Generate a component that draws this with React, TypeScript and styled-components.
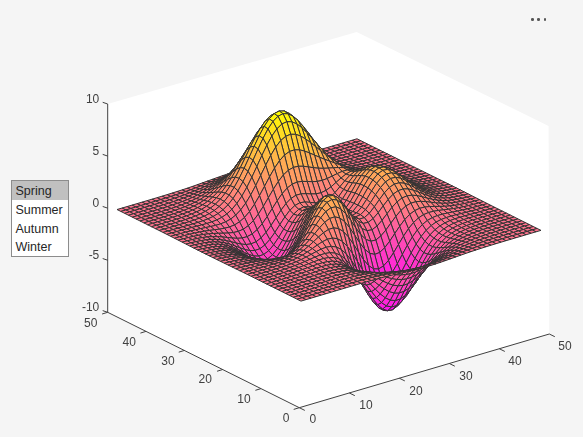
import React from "react";
import styled, { createGlobalStyle } from "styled-components";

const GlobalStyle = createGlobalStyle`
  html, body {
    margin: 0;
    padding: 0;
    background: #f5f5f5;
    font-family: "Liberation Sans", Arial, sans-serif;
  }
`;

const Page = styled.div`
  position: relative;
  width: 583px;
  height: 437px;
  overflow: hidden;
  display: flex;
  align-items: flex-start;
  padding-left: 11px;
  box-sizing: border-box;
  background: #f5f5f5;
`;

const ListBox = styled.ul`
  flex: none;
  width: 58px;
  margin: 180px 0 0;
  padding: 0;
  list-style: none;
  box-sizing: border-box;
  border: 1px solid #8c8c8c;
  background: #fff;
`;

const ListRow = styled.li<{ $selected?: boolean }>`
  height: 18.75px;
  line-height: 20.5px;
  padding-left: 3.5px;
  font-size: 12.5px;
  color: #262626;
  white-space: nowrap;
  background: ${(p) => (p.$selected ? "#c0c0c0" : "#fff")};
`;

const Plot = styled.svg`
  flex: none;
  display: block;
  width: 514px;
  height: 437px;
  filter: blur(0.3px);
`;

const AxesBox = styled.polygon`
  fill: #fff;
`;

const Mesh = styled.g`
  stroke: #333;
  stroke-width: 1;
  stroke-linejoin: round;
`;

const AxisRule = styled.g`
  stroke: #404040;
  stroke-width: 1;
  fill: none;
`;

const TickLabel = styled.text`
  font-family: "Liberation Sans", Arial, sans-serif;
  font-size: 12px;
  fill: #404040;
  dominant-baseline: central;
`;

const AxesToolbar = styled.div`
  position: absolute;
  left: 531px;
  top: 18px;
  display: flex;
  gap: 3.7px;
`;

const ToolbarDot = styled.span`
  width: 2.6px;
  height: 2.6px;
  border-radius: 50%;
  background: #555;
`;

const N = 49;
const OX = 299.8;
const OY = 408.7;
const XV = [250 / 50, -73.7 / 50];
const YV = [-191.6 / 50, -95.4 / 50];
const ZS = 10.42;

const project = (u: number, v: number, z: number): [number, number] => [
  OX + u * XV[0] + v * YV[0],
  OY + u * XV[1] + v * YV[1] - (z + 10) * ZS,
];

const peaks = (x: number, y: number) =>
  3 * (1 - x) ** 2 * Math.exp(-(x ** 2) - (y + 1) ** 2) -
  10 * (x / 5 - x ** 3 - y ** 5) * Math.exp(-(x ** 2) - y ** 2) -
  (1 / 3) * Math.exp(-((x + 1) ** 2) - y ** 2);

const buildFaces = () => {
  const toWorld = (i: number) => -3 + (6 * (i - 1)) / (N - 1);
  const z: number[][] = [];
  let min = Infinity;
  let max = -Infinity;
  for (let i = 1; i <= N; i++) {
    z[i] = [];
    for (let j = 1; j <= N; j++) {
      const v = peaks(toWorld(i), toWorld(j));
      z[i][j] = v;
      min = Math.min(min, v);
      max = Math.max(max, v);
    }
  }
  const faces: { d: string; fill: string }[] = [];
  for (let i = N - 1; i >= 1; i--) {
    for (let j = N - 1; j >= 1; j--) {
      const pts = [
        project(i, j, z[i][j]),
        project(i + 1, j, z[i + 1][j]),
        project(i + 1, j + 1, z[i + 1][j + 1]),
        project(i, j + 1, z[i][j + 1]),
      ];
      const t = (z[i][j] - min) / (max - min);
      faces.push({
        d: "M" + pts.map((p) => `${p[0].toFixed(2)} ${p[1].toFixed(2)}`).join("L") + "Z",
        fill: `rgb(255,${Math.round(t * 255)},${Math.round((1 - t) * 255)})`,
      });
    }
  }
  return faces;
};

const faces = buildFaces();

const seasons = ["Spring", "Summer", "Autumn", "Winter"];

type Label = { text: string; x: number; y: number; anchor?: "end" | "middle" };

const labels: Label[] = [
  { text: "10", x: 99.3, y: 98.5, anchor: "end" },
  { text: "5", x: 99.3, y: 150.5, anchor: "end" },
  { text: "0", x: 99.3, y: 202.5, anchor: "end" },
  { text: "-5", x: 99.3, y: 255, anchor: "end" },
  { text: "-10", x: 99.3, y: 306.7, anchor: "end" },
  { text: "50", x: 90.7, y: 323 },
  { text: "40", x: 129.3, y: 341.7 },
  { text: "30", x: 168, y: 360.7 },
  { text: "20", x: 205.3, y: 379 },
  { text: "10", x: 244, y: 398.7 },
  { text: "0", x: 286, y: 417.5 },
  { text: "0", x: 312.8, y: 419 },
  { text: "10", x: 366, y: 404.8 },
  { text: "20", x: 416, y: 390.5 },
  { text: "30", x: 466, y: 375.5 },
  { text: "40", x: 515, y: 361 },
  { text: "50", x: 565, y: 345.5 },
];

const axisTicks = () => {
  const segs: string[] = [];
  for (let k = 0; k <= 4; k++) {
    const y = 104 + k * 52.08;
    segs.push(`M107.7 ${y}l-5 -1.7`);
  }
  for (let k = 0; k <= 5; k++) {
    const x = 107.7 + (k * (299.3 - 107.7)) / 5;
    const y = 312.3 + (k * (407.7 - 312.3)) / 5;
    segs.push(`M${x} ${y}l-5.6 1.7`);
  }
  for (let k = 0; k <= 5; k++) {
    const x = 299.3 + k * 50;
    const y = 407.7 - k * 14.74;
    segs.push(`M${x} ${y}l5.5 2.7`);
  }
  return segs.join("");
};

export default function App() {
  return (
    <Page>
      <GlobalStyle />
      <ListBox>
        {seasons.map((s, i) => (
          <ListRow key={s} $selected={i === 0}>
            {s}
          </ListRow>
        ))}
      </ListBox>
      <Plot viewBox="69 0 514 437">
        <AxesBox points="107.7,104 356.7,32 548.6,126 549.3,334 299.3,407.7 107.7,312.3" />
        <AxisRule>
          <path d={`M107.7 104V312.3L299.3 407.7L549.3 334${axisTicks()}`} />
        </AxisRule>
        <Mesh>
          {faces.map((f, i) => (
            <path key={i} d={f.d} fill={f.fill} />
          ))}
        </Mesh>
        {labels.map((l, i) => (
          <TickLabel key={i} x={l.x} y={l.y} textAnchor={l.anchor ?? "middle"}>
            {l.text}
          </TickLabel>
        ))}
      </Plot>
      <AxesToolbar>
        <ToolbarDot />
        <ToolbarDot />
        <ToolbarDot />
      </AxesToolbar>
    </Page>
  );
}
